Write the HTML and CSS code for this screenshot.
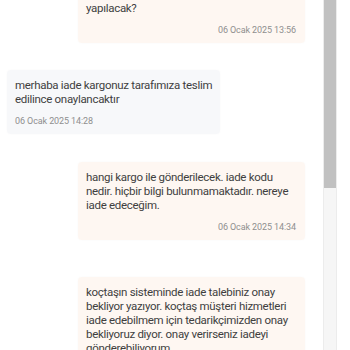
FILE: index.html
```html
<!DOCTYPE html>
<html lang="tr">
<head>
<meta charset="utf-8">
<link rel="stylesheet" href="styles.css">
</head>
<body>
<div class="page">
  <div class="chat">
    <div class="msg msg-out msg-first">
      <div class="msg-text">yapılacak?</div>
      <div class="msg-time">06 Ocak 2025 13:56</div>
    </div>
    <div class="msg msg-in">
      <div class="msg-text">merhaba iade kargonuz tarafımıza teslim edilince onaylancaktır</div>
      <div class="msg-time">06 Ocak 2025 14:28</div>
    </div>
    <div class="msg msg-out">
      <div class="msg-text">hangi kargo ile gönderilecek. iade kodu nedir. hiçbir bilgi bulunmamaktadır. nereye iade edeceğim.</div>
      <div class="msg-time">06 Ocak 2025 14:34</div>
    </div>
    <div class="msg msg-out msg-last">
      <div class="msg-text">koçtaşın sisteminde iade talebiniz onay bekliyor yazıyor. koçtaş müşteri hizmetleri iade edebilmem için tedarikçimizden onay bekliyoruz diyor. onay verirseniz iadeyi gönderebiliyorum.</div>
    </div>
  </div>
  <div class="scrollbar">
    <div class="scrollbar-thumb"></div>
  </div>
</div>
</body>
</html>
```

FILE: styles.css
```css
html, body {
  margin: 0;
  padding: 0;
  background: #ffffff;
}

.page {
  display: flex;
  width: 350px;
  height: 350px;
  overflow: hidden;
  font-family: Roboto, "Liberation Sans", Arial, sans-serif;
}

.chat {
  flex: 1;
  display: flex;
  flex-direction: column;
  gap: 27px;
  padding: 0 18px 0 7px;
}

.msg {
  box-sizing: border-box;
  border-radius: 4px;
  padding: 8px 9px 7px 8px;
  box-shadow: 0 0 3px rgba(0, 0, 0, 0.025);
}

.msg-out {
  align-self: flex-end;
  width: 227px;
  background: #fef7f2;
}

.msg-in {
  align-self: flex-start;
  width: 213px;
  padding-right: 3px;
  background: #f7f8fa;
}

.msg-in + .msg-out {
  margin-top: 1px;
}

.msg-first {
  margin-top: -7px;
}

.msg-last {
  margin-top: 10px;
}

.msg-text {
  font-size: 11.5px;
  line-height: 14px;
  letter-spacing: -0.3px;
  color: #3f3f3f;
}

.msg-time {
  margin-top: 9px;
  font-size: 9px;
  line-height: 12px;
  letter-spacing: -0.1px;
  color: #8f8f8f;
}

.msg-out .msg-time {
  text-align: right;
}

.scrollbar {
  width: 14px;
  margin-right: 13px;
  flex: none;
  box-sizing: border-box;
  background: #f6f6f6;
  border-left: 1px solid #ececec;
  border-right: 1px solid #ececec;
}

.scrollbar-thumb {
  height: 188px;
  background: #c1c1c1;
}
```
